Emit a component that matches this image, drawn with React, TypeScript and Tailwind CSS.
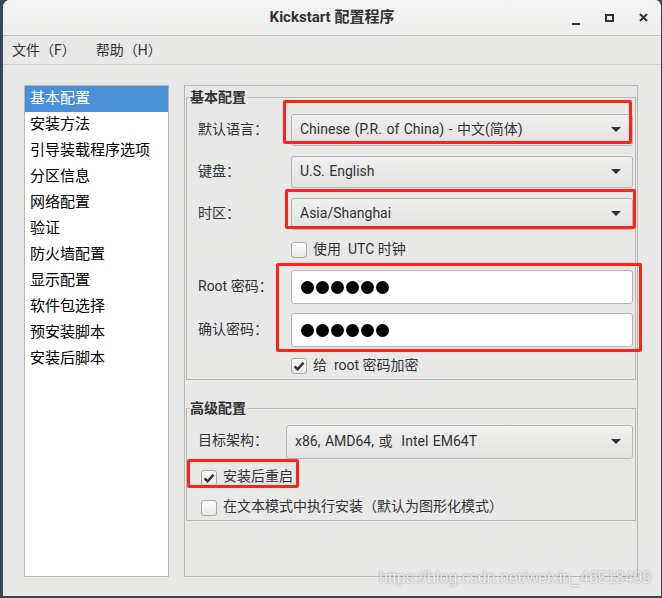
import React from 'react';

const navItems = ['基本配置', '安装方法', '引导装载程序选项', '分区信息', '网络配置', '验证', '防火墙配置', '显示配置', '软件包选择', '预安装脚本', '安装后脚本'];

const Arrow = () => (
  <svg width="10" height="5" viewBox="0 0 10 5" className="shrink-0">
    <path d="M0 0h10L5 5z" fill="#2e3436" />
  </svg>
);

// GTK style combo box
const Combo = ({ value, size }: { value: string; size: string }) => (
  <div className={`${size} flex items-center justify-between pl-[8px] pr-[11px] pb-px rounded-[3px] border border-[#b6b6b3] bg-linear-to-b from-[#f0f0ef] to-[#e2e2e1] text-[14px] text-[#2e3436]`}>
    <span className="whitespace-pre [word-spacing:1px]">{value}</span>
    <Arrow />
  </div>
);

const Check = ({ checked }: { checked?: boolean }) => (
  <span className="w-[16px] h-[16px] rounded-[3px] border border-[#a9a9a7] bg-linear-to-b from-[#fdfdfd] to-[#e9e9e8] flex items-center justify-center shrink-0">
    {checked && (
      <svg width="12" height="12" viewBox="0 0 12 12">
        <path d="M1.6 6.3 4.6 9.2 10.6 2.6" fill="none" stroke="#2e3436" strokeWidth="2.4" />
      </svg>
    )}
  </span>
);

const Dots = () => (
  <div className="h-[34px] flex items-center gap-[2px] pl-[9px] rounded-[3px] border border-[#b6b6b3] bg-white">
    {[0, 1, 2, 3, 4, 5].map(i => (
      <span key={i} className="w-[13px] h-[13px] rounded-full bg-black" />
    ))}
  </div>
);

export default function App() {
  return (
    <div className="relative w-[662px] h-[598px] bg-[#33495c] font-['Roboto','Noto_Sans_CJK_SC',sans-serif] text-[#2e3436]">
      <div className="ml-[3px] w-[659px] h-[596px] flex flex-col bg-[#e8e8e7] rounded-t-[7px] border-r border-[#3a4c5c] overflow-hidden">
        {/* title bar */}
        <div className="relative h-[36px] shrink-0 flex items-center justify-center border-b border-[#c2c2c0] bg-linear-to-b from-[#f4f4f4] to-[#eeeeed]">
          <span className="text-[15px] font-bold leading-[20px] pb-px">Kickstart 配置程序</span>
          <div className="absolute right-[13px] top-0 h-full flex items-center gap-[25px]">
            <span className="w-[8px] h-[8px] flex items-end"><span className="w-[8px] h-[2px] bg-[#2e3436] translate-y-[3px]" /></span>
            <span className="w-[9px] h-[8px] border-2 border-[#2e3436]" />
            <svg width="9" height="9" viewBox="0 0 9 9">
              <path d="M1 1l7 7M8 1L1 8" stroke="#2e3436" strokeWidth="2" />
            </svg>
          </div>
        </div>
        {/* menu bar */}
        <div className="h-[29px] shrink-0 flex items-center gap-[20px] pl-[9px] border-b border-[#cfcfcd] text-[14px] leading-[20px]">
          <span>文件（F）</span>
          <span>帮助（H）</span>
        </div>
        {/* body */}
        <div className="flex-1 flex gap-[15px] pt-[20px] pl-[21px] pb-[19px]">
          <div className="w-[145px] border border-[#b5b5b3] bg-white text-[15px] text-black">
            {navItems.map((t, i) => (
              <div key={t} className={`h-[26px] flex items-center pl-[5px] pb-[2px] leading-[20px] ${i === 0 ? 'bg-[#4a90d9] text-white' : ''}`}>
                {t}
              </div>
            ))}
          </div>
          <div className="w-[454px] border border-[#b8b8b6] p-px">
            <fieldset className="border border-[#b8b8b6] pb-px">
              <legend className="ml-[2px] px-px text-[14px] font-bold leading-[20px]">基本配置</legend>
              <div className="pl-[11px] pr-[2px] pt-[7px] text-[14px]">
                <div className="grid grid-cols-[93px_1fr] gap-y-[10px] items-center">
                  <span className="pb-px">默认语言：</span>
                  <Combo size="h-[32px]" value="Chinese (P.R. of China) - 中文(简体)" />
                  <span className="pb-px">键盘：</span>
                  <Combo size="h-[32px]" value="U.S. English" />
                  <span className="pb-px">时区：</span>
                  <Combo size="h-[32px]" value="Asia/Shanghai" />
                </div>
                <div className="ml-[93px] mt-[8px] h-[24px] flex items-center gap-[6px]">
                  <Check />
                  <span className="whitespace-pre pb-px">使用  UTC 时钟</span>
                </div>
                <div className="mt-[8px] grid grid-cols-[93px_1fr] gap-y-[9px] items-center">
                  <span className="pb-px">Root 密码：</span>
                  <Dots />
                  <span className="pb-px">确认密码：</span>
                  <Dots />
                </div>
                <div className="ml-[93px] mt-[7px] h-[24px] flex items-center gap-[6px]">
                  <Check checked />
                  <span className="whitespace-pre pb-px">给  root 密码加密</span>
                </div>
              </div>
            </fieldset>
            <fieldset className="mt-[18px] border border-[#b8b8b6] pb-px">
              <legend className="ml-[2px] px-px text-[14px] font-bold leading-[20px]">高级配置</legend>
              <div className="pl-[11px] pr-[2px] pt-[7px] text-[14px]">
                <div className="grid grid-cols-[88px_1fr] items-center">
                  <span className="pb-[3px]">目标架构：</span>
                  <Combo size="h-[34px]" value="x86, AMD64, 或  Intel EM64T" />
                </div>
                <div className="ml-[3px] mt-[8px] h-[22px] flex items-center gap-[6px]">
                  <Check checked />
                  <span className="pb-[3px]">安装后重启</span>
                </div>
                <div className="ml-[3px] mt-[8px] h-[22px] flex items-center gap-[6px]">
                  <Check />
                  <span className="pb-[3px]">在文本模式中执行安装（默认为图形化模式）</span>
                </div>
              </div>
            </fieldset>
          </div>
        </div>
      </div>

      {/* red annotation boxes */}
      <div className="absolute left-[283px] top-[100px] w-[349px] h-[44px] border-[3px] border-[#ff2418] rounded-[2px]" />
      <div className="absolute left-[285px] top-[189px] w-[351px] h-[40px] border-[3px] border-[#ff2418] rounded-[2px]" />
      <div className="absolute left-[276px] top-[263px] w-[366px] h-[89px] border-[3px] border-[#ff2418] rounded-[2px]" />
      <div className="absolute left-[187px] top-[459px] w-[112px] h-[29px] border-[3px] border-[#ff2418] rounded-[2px]" />

      {/* watermark */}
      <span className="absolute left-[379px] top-[569px] text-[16px] leading-[18px] font-['Liberation_Sans',sans-serif] text-white/80 [text-shadow:0_0_2px_rgba(0,0,0,0.45)]">
        https://blog.csdn.net/weixin_46518499
      </span>
    </div>
  );
}
